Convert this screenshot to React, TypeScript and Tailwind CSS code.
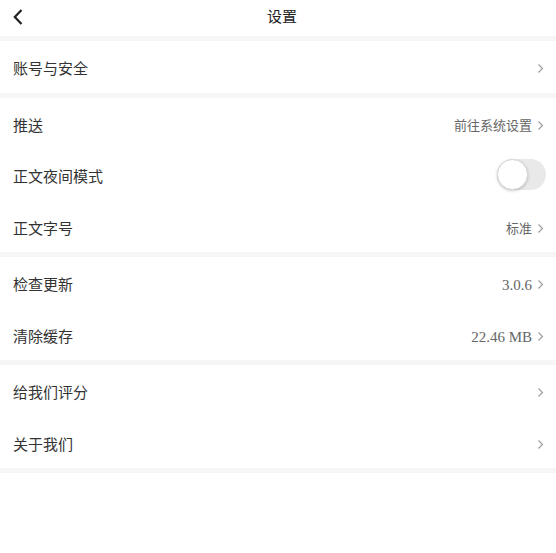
import { useState } from "react";

function Chevron() {
    return (
        <svg width="7" height="11" viewBox="0 0 7 11" className="ml-[5px] shrink-0">
            <polyline points="1.5,1.5 5.5,5.5 1.5,9.5" fill="none" stroke="#9a9a9a" strokeWidth="1.1" />
        </svg>
    );
}

function Sep() {
    return <div className="h-[5px] bg-[#f6f6f6]" />;
}

function Row({ label, value, num = false, arrow = true, children }: { label: string; value?: string; num?: boolean; arrow?: boolean; children?: React.ReactNode }) {
    return (
        <div className={`h-[51.5px] flex items-center justify-between pl-[13px] ${arrow ? "pr-[12px]" : "pr-[10px]"}`}>
            <span className="text-[15px] text-[#333] pt-[5px]">{label}</span>
            <div className="flex items-center">
                {value && <span className={`${num ? "text-[15px]" : "text-[13px]"} text-[#666] pt-[5px]`}>{value}</span>}
                {children}
                {arrow && <span className="pt-[4px] flex"><Chevron /></span>}
            </div>
        </div>
    );
}

export default function App() {
    const [night, setNight] = useState(false);

    return (
        <main className="w-[556px] h-[553px] bg-white" style={{ fontFamily: '"Liberation Serif", "Noto Sans CJK SC", serif' }}>
            <header className="h-[36px] relative flex items-center justify-center">
                <button className="absolute left-[12px] top-[8px]">
                    <svg width="12" height="18" viewBox="0 0 12 18">
                        <polyline points="9.5,2 2.8,9 9.5,16" fill="none" stroke="#222" strokeWidth="2.2" />
                    </svg>
                </button>
                <h1 className="text-[15px] text-[#222] ml-[8px] -mt-[1px]">设置</h1>
            </header>
            <Sep />
            <Row label="账号与安全" />
            <Sep />
            <Row label="推送" value="前往系统设置" />
            <Row label="正文夜间模式" arrow={false}>
                <button
                    onClick={() => setNight(!night)}
                    className={`w-[49px] h-[31px] rounded-full relative ${night ? "bg-[#4cd964]" : "bg-[#e9e9e9]"}`}
                >
                    <span className={`absolute top-0 ${night ? "left-[18px]" : "left-0"} w-[31px] h-[31px] rounded-full bg-white border border-[#d8d8d8] shadow-[0_1px_3px_rgba(0,0,0,0.2)]`} />
                </button>
            </Row>
            <Row label="正文字号" value="标准" />
            <Sep />
            <Row label="检查更新" value="3.0.6" num />
            <Row label="清除缓存" value="22.46 MB" num />
            <Sep />
            <Row label="给我们评分" />
            <Row label="关于我们" />
            <Sep />
        </main>
    );
}
